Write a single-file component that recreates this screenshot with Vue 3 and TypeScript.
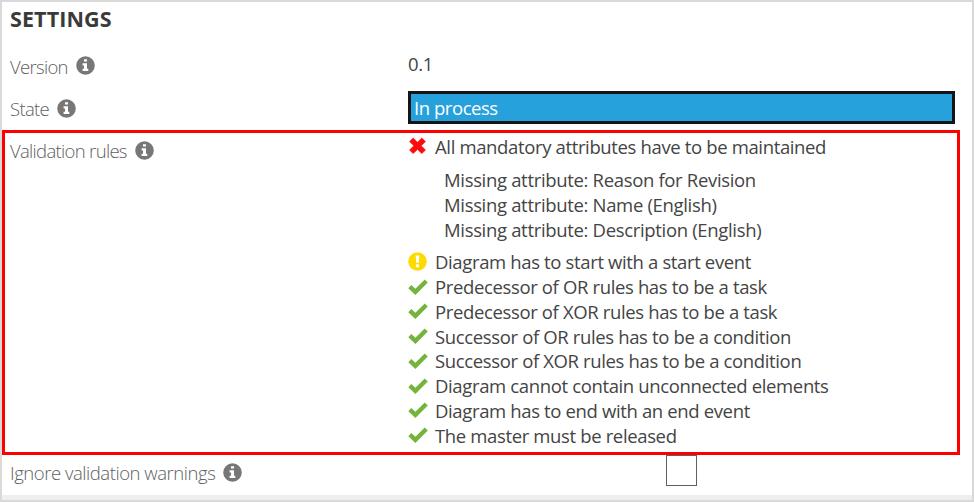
<script setup lang="ts">
import { h, type FunctionalComponent } from 'vue'

type Status = 'error' | 'warning' | 'ok'

interface Rule {
  text: string
  status: Status
  details?: string[]
}

const rules: Rule[] = [
  {
    text: 'All mandatory attributes have to be maintained',
    status: 'error',
    details: [
      'Missing attribute: Reason for Revision',
      'Missing attribute: Name (English)',
      'Missing attribute: Description (English)',
    ],
  },
  { text: 'Diagram has to start with a start event', status: 'warning' },
  { text: 'Predecessor of OR rules has to be a task', status: 'ok' },
  { text: 'Predecessor of XOR rules has to be a task', status: 'ok' },
  { text: 'Successor of OR rules has to be a condition', status: 'ok' },
  { text: 'Successor of XOR rules has to be a condition', status: 'ok' },
  { text: 'Diagram cannot contain unconnected elements', status: 'ok' },
  { text: 'Diagram has to end with an end event', status: 'ok' },
  { text: 'The master must be released', status: 'ok' },
]

const InfoIcon: FunctionalComponent = () =>
  h('svg', { width: 19, height: 19, viewBox: '0 0 19 19', 'aria-hidden': 'true' }, [
    h('circle', { cx: 9.5, cy: 9.5, r: 9.3, fill: '#777' }),
    h('path', { d: 'M8 3.2h3v2.4H8zM6.6 7.2H11v5.6h1.3V15H6.6v-2.2H8V9.4H6.6z', fill: '#fff' }),
  ])
</script>

<template>
  <main class="panel">
    <h1 class="title">SETTINGS</h1>
    <div class="row">
      <div class="label"><span>Version</span><InfoIcon /></div>
      <div class="value">0.1</div>
    </div>
    <div class="row">
      <div class="label state-label"><span>State</span><InfoIcon /></div>
      <div class="state">In process</div>
    </div>
    <section class="row highlighted">
      <div class="label"><span>Validation rules</span><InfoIcon /></div>
      <ul class="rules">
        <li v-for="rule in rules" :key="rule.text">
          <div class="rule">
            <svg v-if="rule.status === 'error'" class="icon" viewBox="0 0 20 20">
              <path d="M5.2 2.100 9.500 6.200l4.300-4.100 3.700 3.500-4.300 4.200 4.300 4.300-3.700 3.500-4.300-4.200-4.300 4.200-3.700-3.500 4.300-4.300L1.500 5.600z" fill="#fb0d0d" stroke="#fb0d0d" stroke-width=".6" stroke-linejoin="round" />
            </svg>
            <svg v-else-if="rule.status === 'warning'" class="icon" viewBox="0 0 20 20">
              <circle cx="9.500" cy="9.500" r="9.300" fill="#fddb00" />
              <path d="M7.700 3.500h3.600l-.4 7.300H8.100zM8 12.300h3v2.900H8z" fill="#fff" />
            </svg>
            <svg v-else class="icon" viewBox="0 0 20 20">
              <path d="m.3 11.300 3-3.300 4.100 3.700L16.700 2.400l3.100 3.100L7.400 18.100z" fill="#74b43c" />
            </svg>
            <span>{{ rule.text }}</span>
          </div>
          <ul v-if="rule.details" class="details">
            <li v-for="detail in rule.details" :key="detail">{{ detail }}</li>
          </ul>
        </li>
      </ul>
    </section>
    <div class="row ignore">
      <div class="label"><span>Ignore validation warnings</span><InfoIcon /></div>
      <div class="check-cell"><input class="check" type="checkbox" aria-label="Ignore validation warnings" /></div>
    </div>
    <div class="footer"></div>
  </main>
</template>

<style>
body {
  margin: 0;
  background: #fff;
}
</style>

<style scoped>
.panel {
  box-sizing: border-box;
  width: 974px;
  height: 502px;
  border: 2px solid #d9d9d9;
  display: flex;
  flex-direction: column;
  overflow: hidden;
  font-family: 'Open Sans', 'Noto Sans', sans-serif;
  font-size: 18.500px;
  letter-spacing: -0.360px;
  color: #444;
}
.title {
  margin: 0;
  padding-left: 8px;
  height: 42px;
  line-height: 33px;
  font-size: 21.500px;
  font-weight: 700;
  letter-spacing: 0.100px;
  color: #3a3a3a;
}
.row {
  box-sizing: border-box;
  height: 43px;
  flex: none;
  display: grid;
  grid-template-columns: 398px 1fr;
  padding-left: 8px;
}
.label {
  display: flex;
  align-items: center;
  gap: 8px;
  height: 43px;
  font-weight: 300;
  letter-spacing: -0.680px;
  color: #606060;
}
.label span {
  padding-top: 1px;
}
.state-label {
  height: 42px;
}
.state-label span {
  padding-top: 0;
}
.value {
  line-height: 40px;
}
.state {
  box-sizing: border-box;
  height: 33px;
  width: 547px;
  margin-top: 4px;
  border: 3px solid #151515;
  background: #27a1dc;
  color: #fff;
  line-height: 27px;
  padding-left: 3px;
  letter-spacing: -0.450px;
}
.highlighted {
  width: 958px;
  height: 325px;
  border: 3px solid #f00;
  padding-left: 5px;
}
.highlighted .label {
  height: 35px;
}
.highlighted .label span,
.ignore .label span {
  padding-top: 0;
}
ul {
  margin: 0;
  padding: 0;
  list-style: none;
}
.rules {
  padding-top: 1px;
}
.rule {
  display: flex;
  align-items: center;
  gap: 7px;
  height: 24.750px;
  white-space: nowrap;
}
.icon {
  width: 20px;
  height: 20px;
  flex: none;
}
.details {
  padding: 8px 0 7.700px 36px;
  line-height: 25px;
  letter-spacing: -0.330px;
}
.ignore {
  height: 40px;
}
.ignore .label {
  height: 35px;
  letter-spacing: -0.460px;
}
.check-cell {
  padding-left: 258px;
}
.check {
  appearance: none;
  box-sizing: border-box;
  display: block;
  width: 31px;
  height: 31px;
  margin: 0;
  border: 1px solid #606060;
  background: #fff;
}
.footer {
  height: 5px;
  flex: none;
  background: #eee;
}
</style>
